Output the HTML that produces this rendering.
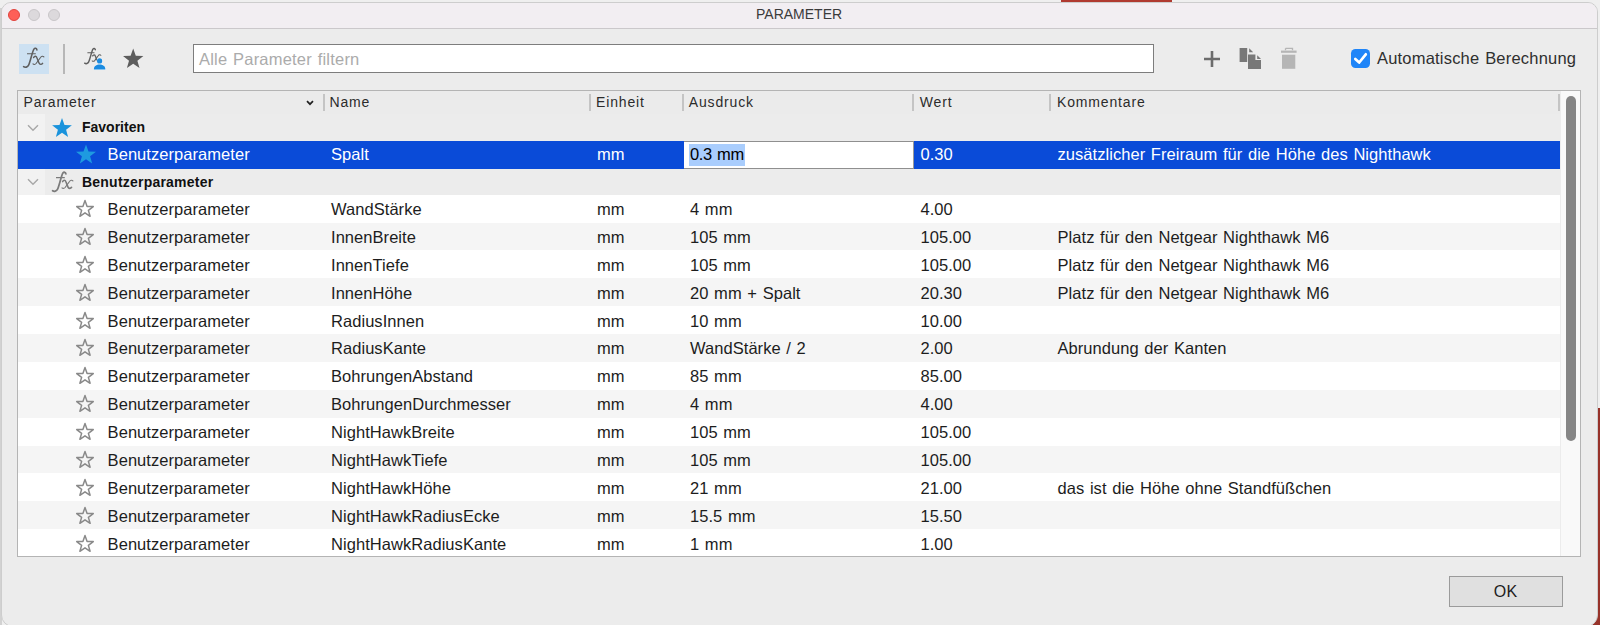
<!DOCTYPE html>
<html><head><meta charset="utf-8"><style>
*{margin:0;padding:0;box-sizing:border-box}
html,body{width:1600px;height:625px;overflow:hidden;background:#efefef;font-family:"Liberation Sans",sans-serif}
.a{position:absolute}
.t{position:absolute;white-space:pre;font-size:16.5px;letter-spacing:0.05px;word-spacing:1px;color:#1d1d1d;line-height:20px}
.h{position:absolute;white-space:pre;font-size:14px;letter-spacing:0.85px;color:#2b2b2b;line-height:18px}
.ic{position:absolute}
</style></head><body>

<div class="a" style="left:0;top:8px;width:2px;height:617px;background:#d2d2d2"></div>
<div class="a" style="left:1061px;top:0;width:111px;height:3px;background:#b03a30"></div>
<div class="a" style="left:1585px;top:408px;width:15px;height:217px;background:#97332a"></div>
<div class="a" style="left:1px;top:2px;width:1597px;height:625px;background:#ececec;border:1px solid #cdcdcd;border-radius:10px 10px 12px 12px;overflow:hidden">
<div class="a" style="left:0;top:0;width:1595px;height:26px;background:#f2eef2;border-bottom:1px solid #cbc8cb"></div>
<div class="a" style="left:6px;top:6px;width:12px;height:12px;border-radius:50%;background:#fe5f57;border:0.5px solid #e0443e"></div>
<div class="a" style="left:26px;top:6px;width:12px;height:12px;border-radius:50%;background:#dcd9dc;border:0.5px solid #c8c5c8"></div>
<div class="a" style="left:46px;top:6px;width:12px;height:12px;border-radius:50%;background:#dcd9dc;border:0.5px solid #c8c5c8"></div>
<div class="a" style="left:754px;top:2px;white-space:pre;font-size:14px;color:#3b3b3b;line-height:18px">PARAMETER</div>
<div class="a" style="left:17px;top:41px;width:30px;height:30px;background:#cde1f2"></div>
<svg class="a" style="left:17px;top:41px" width="30.0" height="30.0" viewBox="0 0 30 30"><g fill="none" stroke="#5f5f5f" stroke-linecap="round"><path d="M17.9 5.9C17.6 4.1 15.9 3.7 14.9 5.1C13.4 7.3 11.2 18 9.6 21.1C8.6 23.2 6.2 23.9 4.6 22.7" stroke-width="1.6"/><path d="M8 9.7H16.8" stroke-width="1.15" stroke-linecap="butt"/><path d="M14.6 13.6C15.5 11.9 17.2 11.8 17.8 13.5L20 19.1C20.6 20.7 22.6 20.8 23.6 19.3" stroke-width="1.45"/><path d="M24.9 12.9C24 11.9 22.5 12 21.5 13.5L17.1 19.5C16.1 20.8 14.6 20.6 14 19.9" stroke-width="1.1"/></g></svg>
<div class="a" style="left:61px;top:41px;width:2px;height:30px;background:#b7b7b7"></div>
<svg class="a" style="left:79px;top:41.5px" width="24.0" height="24.0" viewBox="0 0 30 30"><g fill="none" stroke="#5f5f5f" stroke-linecap="round"><path d="M17.9 5.9C17.6 4.1 15.9 3.7 14.9 5.1C13.4 7.3 11.2 18 9.6 21.1C8.6 23.2 6.2 23.9 4.6 22.7" stroke-width="1.8399999999999999"/><path d="M8 9.7H16.8" stroke-width="1.3224999999999998" stroke-linecap="butt"/><path d="M14.6 13.6C15.5 11.9 17.2 11.8 17.8 13.5L20 19.1C20.6 20.7 22.6 20.8 23.6 19.3" stroke-width="1.6674999999999998"/><path d="M24.9 12.9C24 11.9 22.5 12 21.5 13.5L17.1 19.5C16.1 20.8 14.6 20.6 14 19.9" stroke-width="1.265"/></g></svg>
<svg class="a" style="left:88px;top:51px" width="18" height="18" viewBox="90 54 18 18"><g fill="#1b8be0" stroke="#f4faff" stroke-width="1" paint-order="stroke"><circle cx="99.6" cy="60.9" r="2.6"/><path d="M93.8 69.5C93.8 65.8 96.5 64.4 99.6 64.4C102.7 64.4 105.4 65.8 105.4 69.5Z"/></g></svg>
<svg class="a" style="left:120px;top:45px" width="22" height="22" viewBox="0 0 22 22"><polygon points="11.20,0.60 13.79,7.74 21.38,7.99 15.38,12.66 17.49,19.96 11.20,15.70 4.91,19.96 7.02,12.66 1.02,7.99 8.61,7.74" fill="#5d5d5d"/></svg>
<div class="a" style="left:191px;top:41px;width:961px;height:29px;background:#fff;border:1.5px solid #7d7d7d"></div>
<div class="t" style="left:197px;top:45.7px;color:#ababab;letter-spacing:0.2px">Alle Parameter filtern</div>
<svg class="a" style="left:1201px;top:47px" width="18" height="18" viewBox="0 0 18 18"><path d="M9 1V17M1 9H17" stroke="#6c6c6c" stroke-width="2.6"/></svg>
<svg class="a" style="left:1234px;top:41px" width="28" height="28" viewBox="1236 44 28 28"><g fill="#787878"><path d="M1239.6 48.1H1247.2V61.9H1239.6Z"/><path d="M1249.2 48.2V52.2H1253.2Z"/><path d="M1248 54.5H1255.4V60H1261V69H1248Z"/><path d="M1257.2 55.3V59H1261Z"/></g></svg>
<svg class="a" style="left:1278px;top:43px" width="18" height="24" viewBox="0 0 18 24"><path d="M5.5 2.3H12.5V4.3" fill="none" stroke="#b5b5b5" stroke-width="1.3"/><path d="M5.5 2.3V4.3" stroke="#b5b5b5" stroke-width="1.3"/><rect x="1" y="4.6" width="15.6" height="2.2" fill="#b5b5b5"/><rect x="2" y="8.7" width="13.3" height="14.1" fill="#b5b5b5"/></svg>
<div class="a" style="left:1349px;top:46px;width:19px;height:19px;border-radius:4.5px;background:#1f85f8"></div>
<svg class="a" style="left:1349px;top:46px" width="19" height="19" viewBox="0 0 19 19"><path d="M4.3 9.9L8.2 13.5L14.8 5.3" fill="none" stroke="#fff" stroke-width="2.7" stroke-linecap="round" stroke-linejoin="round"/></svg>
<div class="t" style="left:1375px;top:44.7px;color:#2f2f2f;letter-spacing:0.2px">Automatische Berechnung</div>
<div class="a" style="left:15px;top:87px;width:1564px;height:467px;background:#fff;border:1px solid #b4b4b4;overflow:hidden">
<div class="a" style="left:0;top:0;width:1542px;height:23px;background:#ebebeb"></div>
<div class="a" style="left:305.3px;top:2.7px;width:1.6px;height:17px;background:#c4c4c4"></div>
<div class="a" style="left:571.3px;top:2.7px;width:1.6px;height:17px;background:#c4c4c4"></div>
<div class="a" style="left:664.3px;top:2.7px;width:1.6px;height:17px;background:#c4c4c4"></div>
<div class="a" style="left:894.3px;top:2.7px;width:1.6px;height:17px;background:#c4c4c4"></div>
<div class="a" style="left:1031.3px;top:2.7px;width:1.6px;height:17px;background:#c4c4c4"></div>
<div class="a" style="left:1540.3px;top:2.7px;width:1.6px;height:17px;background:#c4c4c4"></div>
<div class="h" style="left:5.5px;top:1.5px">Parameter</div>
<div class="h" style="left:311.5px;top:1.5px">Name</div>
<div class="h" style="left:578px;top:1.5px">Einheit</div>
<div class="h" style="left:670.8px;top:1.5px">Ausdruck</div>
<div class="h" style="left:901.8px;top:1.5px">Wert</div>
<div class="h" style="left:1039px;top:1.5px">Kommentare</div>
<svg class="a" style="left:287px;top:7.6px" width="10" height="8" viewBox="0 0 10 8"><path d="M2 2.2L5 5.2L8 2.2" fill="none" stroke="#222" stroke-width="1.7"/></svg>
<div class="a" style="left:1542px;top:0;width:21px;height:467px;background:#f9f9f9;border-left:1px solid #ececec"></div>
<div class="a" style="left:1547.5px;top:4.5px;width:10.5px;height:345px;border-radius:5.25px;background:#858585"></div>
<div class="a" style="left:0;top:23px;width:1542px;height:27px;background:#ececec"></div>
<div class="a" style="left:0;top:23px;width:27px;height:27px;background:#f2f2f2"></div>
<svg class="a" style="left:9px;top:33px" width="12" height="8" viewBox="0 0 12 8"><path d="M1 1.3L6 6.3L11 1.3" fill="none" stroke="#a9a9a9" stroke-width="1.5"/></svg>
<svg class="a" style="left:32.4px;top:25px" width="24" height="24" viewBox="0 0 24 24"><polygon points="12.00,2.10 14.53,9.02 21.89,9.29 16.09,13.83 18.11,20.91 12.00,16.80 5.89,20.91 7.91,13.83 2.11,9.29 9.47,9.02" fill="#1a93dc"/></svg>
<div class="h" style="left:64px;top:27px;font-weight:bold;color:#111;letter-spacing:0px;font-size:14px">Favoriten</div>
<div class="a" style="left:0;top:50px;width:1542px;height:28px;background:#0a4bd8"></div>
<svg class="a" style="left:55.8px;top:52px" width="24" height="24" viewBox="0 0 24 24"><polygon points="12.00,1.50 14.53,8.52 21.99,8.76 16.09,13.33 18.17,20.49 12.00,16.30 5.83,20.49 7.91,13.33 2.01,8.76 9.47,8.52" fill="#1e9ae0"/></svg>
<div class="t" style="left:89.6px;top:53px;color:#fff">Benutzerparameter</div>
<div class="t" style="left:313px;top:53px;color:#fff">Spalt</div>
<div class="t" style="left:579px;top:53px;color:#fff">mm</div>
<div class="t" style="left:902.5px;top:53px;color:#fff">0.30</div>
<div class="t" style="left:1039.5px;top:53px;color:#fff">zusätzlicher Freiraum für die Höhe des Nighthawk</div>
<div class="a" style="left:665.5px;top:50px;width:230px;height:28px;background:#fff;border-top:1px solid #8f8f8f;border-bottom:1px solid #8f8f8f;border-right:1px solid #9a9a9a"></div>
<div class="a" style="left:671px;top:53.3px;width:56px;height:21.5px;background:#a9cdfd"></div>
<div class="t" style="left:672px;top:53px;color:#000;letter-spacing:-0.35px">0.3 mm</div>
<div class="a" style="left:0;top:78px;width:1542px;height:26px;background:#ececec"></div>
<div class="a" style="left:0;top:78px;width:27px;height:26px;background:#f2f2f2"></div>
<svg class="a" style="left:9px;top:87px" width="12" height="8" viewBox="0 0 12 8"><path d="M1 1.3L6 6.3L11 1.3" fill="none" stroke="#a9a9a9" stroke-width="1.5"/></svg>
<svg class="a" style="left:30.3px;top:77px" width="30.0" height="30.0" viewBox="0 0 30 30"><g fill="none" stroke="#7b7b7b" stroke-linecap="round"><path d="M17.9 5.9C17.6 4.1 15.9 3.7 14.9 5.1C13.4 7.3 11.2 18 9.6 21.1C8.6 23.2 6.2 23.9 4.6 22.7" stroke-width="1.7600000000000002"/><path d="M8 9.7H16.8" stroke-width="1.265" stroke-linecap="butt"/><path d="M14.6 13.6C15.5 11.9 17.2 11.8 17.8 13.5L20 19.1C20.6 20.7 22.6 20.8 23.6 19.3" stroke-width="1.595"/><path d="M24.9 12.9C24 11.9 22.5 12 21.5 13.5L17.1 19.5C16.1 20.8 14.6 20.6 14 19.9" stroke-width="1.2100000000000002"/></g></svg>
<div class="h" style="left:64px;top:82px;font-weight:bold;color:#111;letter-spacing:0.22px;font-size:14px">Benutzerparameter</div>
<div class="a" style="left:0;top:103.7px;width:1542px;height:27.98px;background:#ffffff"></div>
<svg class="a" style="left:56px;top:107.0px" width="22" height="22" viewBox="0 0 22 22"><polygon points="11.00,2.55 13.09,8.38 19.27,8.56 14.38,12.35 16.11,18.29 11.00,14.80 5.89,18.29 7.62,12.35 2.73,8.56 8.91,8.38" fill="none" stroke="#8a8a8a" stroke-width="1.5" stroke-linejoin="round"/></svg>
<div class="t" style="left:89.6px;top:108.0px">Benutzerparameter</div>
<div class="t" style="left:313px;top:108.0px">WandStärke</div>
<div class="t" style="left:579px;top:108.0px">mm</div>
<div class="t" style="left:672px;top:108.0px">4 mm</div>
<div class="t" style="left:902.5px;top:108.0px">4.00</div>
<div class="a" style="left:0;top:131.57px;width:1542px;height:27.98px;background:#f5f5f5"></div>
<svg class="a" style="left:56px;top:134.88px" width="22" height="22" viewBox="0 0 22 22"><polygon points="11.00,2.55 13.09,8.38 19.27,8.56 14.38,12.35 16.11,18.29 11.00,14.80 5.89,18.29 7.62,12.35 2.73,8.56 8.91,8.38" fill="none" stroke="#8a8a8a" stroke-width="1.5" stroke-linejoin="round"/></svg>
<div class="t" style="left:89.6px;top:135.88px">Benutzerparameter</div>
<div class="t" style="left:313px;top:135.88px">InnenBreite</div>
<div class="t" style="left:579px;top:135.88px">mm</div>
<div class="t" style="left:672px;top:135.88px">105 mm</div>
<div class="t" style="left:902.5px;top:135.88px">105.00</div>
<div class="t" style="left:1039.5px;top:135.88px">Platz für den Netgear Nighthawk M6</div>
<div class="a" style="left:0;top:159.45px;width:1542px;height:27.98px;background:#ffffff"></div>
<svg class="a" style="left:56px;top:162.75px" width="22" height="22" viewBox="0 0 22 22"><polygon points="11.00,2.55 13.09,8.38 19.27,8.56 14.38,12.35 16.11,18.29 11.00,14.80 5.89,18.29 7.62,12.35 2.73,8.56 8.91,8.38" fill="none" stroke="#8a8a8a" stroke-width="1.5" stroke-linejoin="round"/></svg>
<div class="t" style="left:89.6px;top:163.75px">Benutzerparameter</div>
<div class="t" style="left:313px;top:163.75px">InnenTiefe</div>
<div class="t" style="left:579px;top:163.75px">mm</div>
<div class="t" style="left:672px;top:163.75px">105 mm</div>
<div class="t" style="left:902.5px;top:163.75px">105.00</div>
<div class="t" style="left:1039.5px;top:163.75px">Platz für den Netgear Nighthawk M6</div>
<div class="a" style="left:0;top:187.32px;width:1542px;height:27.98px;background:#f5f5f5"></div>
<svg class="a" style="left:56px;top:190.62px" width="22" height="22" viewBox="0 0 22 22"><polygon points="11.00,2.55 13.09,8.38 19.27,8.56 14.38,12.35 16.11,18.29 11.00,14.80 5.89,18.29 7.62,12.35 2.73,8.56 8.91,8.38" fill="none" stroke="#8a8a8a" stroke-width="1.5" stroke-linejoin="round"/></svg>
<div class="t" style="left:89.6px;top:191.62px">Benutzerparameter</div>
<div class="t" style="left:313px;top:191.62px">InnenHöhe</div>
<div class="t" style="left:579px;top:191.62px">mm</div>
<div class="t" style="left:672px;top:191.62px">20 mm + Spalt</div>
<div class="t" style="left:902.5px;top:191.62px">20.30</div>
<div class="t" style="left:1039.5px;top:191.62px">Platz für den Netgear Nighthawk M6</div>
<div class="a" style="left:0;top:215.2px;width:1542px;height:27.98px;background:#ffffff"></div>
<svg class="a" style="left:56px;top:218.5px" width="22" height="22" viewBox="0 0 22 22"><polygon points="11.00,2.55 13.09,8.38 19.27,8.56 14.38,12.35 16.11,18.29 11.00,14.80 5.89,18.29 7.62,12.35 2.73,8.56 8.91,8.38" fill="none" stroke="#8a8a8a" stroke-width="1.5" stroke-linejoin="round"/></svg>
<div class="t" style="left:89.6px;top:219.5px">Benutzerparameter</div>
<div class="t" style="left:313px;top:219.5px">RadiusInnen</div>
<div class="t" style="left:579px;top:219.5px">mm</div>
<div class="t" style="left:672px;top:219.5px">10 mm</div>
<div class="t" style="left:902.5px;top:219.5px">10.00</div>
<div class="a" style="left:0;top:243.07px;width:1542px;height:27.98px;background:#f5f5f5"></div>
<svg class="a" style="left:56px;top:246.38px" width="22" height="22" viewBox="0 0 22 22"><polygon points="11.00,2.55 13.09,8.38 19.27,8.56 14.38,12.35 16.11,18.29 11.00,14.80 5.89,18.29 7.62,12.35 2.73,8.56 8.91,8.38" fill="none" stroke="#8a8a8a" stroke-width="1.5" stroke-linejoin="round"/></svg>
<div class="t" style="left:89.6px;top:247.38px">Benutzerparameter</div>
<div class="t" style="left:313px;top:247.38px">RadiusKante</div>
<div class="t" style="left:579px;top:247.38px">mm</div>
<div class="t" style="left:672px;top:247.38px">WandStärke / 2</div>
<div class="t" style="left:902.5px;top:247.38px">2.00</div>
<div class="t" style="left:1039.5px;top:247.38px">Abrundung der Kanten</div>
<div class="a" style="left:0;top:270.95px;width:1542px;height:27.98px;background:#ffffff"></div>
<svg class="a" style="left:56px;top:274.25px" width="22" height="22" viewBox="0 0 22 22"><polygon points="11.00,2.55 13.09,8.38 19.27,8.56 14.38,12.35 16.11,18.29 11.00,14.80 5.89,18.29 7.62,12.35 2.73,8.56 8.91,8.38" fill="none" stroke="#8a8a8a" stroke-width="1.5" stroke-linejoin="round"/></svg>
<div class="t" style="left:89.6px;top:275.25px">Benutzerparameter</div>
<div class="t" style="left:313px;top:275.25px">BohrungenAbstand</div>
<div class="t" style="left:579px;top:275.25px">mm</div>
<div class="t" style="left:672px;top:275.25px">85 mm</div>
<div class="t" style="left:902.5px;top:275.25px">85.00</div>
<div class="a" style="left:0;top:298.82px;width:1542px;height:27.98px;background:#f5f5f5"></div>
<svg class="a" style="left:56px;top:302.12px" width="22" height="22" viewBox="0 0 22 22"><polygon points="11.00,2.55 13.09,8.38 19.27,8.56 14.38,12.35 16.11,18.29 11.00,14.80 5.89,18.29 7.62,12.35 2.73,8.56 8.91,8.38" fill="none" stroke="#8a8a8a" stroke-width="1.5" stroke-linejoin="round"/></svg>
<div class="t" style="left:89.6px;top:303.12px">Benutzerparameter</div>
<div class="t" style="left:313px;top:303.12px">BohrungenDurchmesser</div>
<div class="t" style="left:579px;top:303.12px">mm</div>
<div class="t" style="left:672px;top:303.12px">4 mm</div>
<div class="t" style="left:902.5px;top:303.12px">4.00</div>
<div class="a" style="left:0;top:326.7px;width:1542px;height:27.98px;background:#ffffff"></div>
<svg class="a" style="left:56px;top:330.0px" width="22" height="22" viewBox="0 0 22 22"><polygon points="11.00,2.55 13.09,8.38 19.27,8.56 14.38,12.35 16.11,18.29 11.00,14.80 5.89,18.29 7.62,12.35 2.73,8.56 8.91,8.38" fill="none" stroke="#8a8a8a" stroke-width="1.5" stroke-linejoin="round"/></svg>
<div class="t" style="left:89.6px;top:331.0px">Benutzerparameter</div>
<div class="t" style="left:313px;top:331.0px">NightHawkBreite</div>
<div class="t" style="left:579px;top:331.0px">mm</div>
<div class="t" style="left:672px;top:331.0px">105 mm</div>
<div class="t" style="left:902.5px;top:331.0px">105.00</div>
<div class="a" style="left:0;top:354.57px;width:1542px;height:27.98px;background:#f5f5f5"></div>
<svg class="a" style="left:56px;top:357.88px" width="22" height="22" viewBox="0 0 22 22"><polygon points="11.00,2.55 13.09,8.38 19.27,8.56 14.38,12.35 16.11,18.29 11.00,14.80 5.89,18.29 7.62,12.35 2.73,8.56 8.91,8.38" fill="none" stroke="#8a8a8a" stroke-width="1.5" stroke-linejoin="round"/></svg>
<div class="t" style="left:89.6px;top:358.88px">Benutzerparameter</div>
<div class="t" style="left:313px;top:358.88px">NightHawkTiefe</div>
<div class="t" style="left:579px;top:358.88px">mm</div>
<div class="t" style="left:672px;top:358.88px">105 mm</div>
<div class="t" style="left:902.5px;top:358.88px">105.00</div>
<div class="a" style="left:0;top:382.45px;width:1542px;height:27.98px;background:#ffffff"></div>
<svg class="a" style="left:56px;top:385.75px" width="22" height="22" viewBox="0 0 22 22"><polygon points="11.00,2.55 13.09,8.38 19.27,8.56 14.38,12.35 16.11,18.29 11.00,14.80 5.89,18.29 7.62,12.35 2.73,8.56 8.91,8.38" fill="none" stroke="#8a8a8a" stroke-width="1.5" stroke-linejoin="round"/></svg>
<div class="t" style="left:89.6px;top:386.75px">Benutzerparameter</div>
<div class="t" style="left:313px;top:386.75px">NightHawkHöhe</div>
<div class="t" style="left:579px;top:386.75px">mm</div>
<div class="t" style="left:672px;top:386.75px">21 mm</div>
<div class="t" style="left:902.5px;top:386.75px">21.00</div>
<div class="t" style="left:1039.5px;top:386.75px">das ist die Höhe ohne Standfüßchen</div>
<div class="a" style="left:0;top:410.32px;width:1542px;height:27.98px;background:#f5f5f5"></div>
<svg class="a" style="left:56px;top:413.62px" width="22" height="22" viewBox="0 0 22 22"><polygon points="11.00,2.55 13.09,8.38 19.27,8.56 14.38,12.35 16.11,18.29 11.00,14.80 5.89,18.29 7.62,12.35 2.73,8.56 8.91,8.38" fill="none" stroke="#8a8a8a" stroke-width="1.5" stroke-linejoin="round"/></svg>
<div class="t" style="left:89.6px;top:414.62px">Benutzerparameter</div>
<div class="t" style="left:313px;top:414.62px">NightHawkRadiusEcke</div>
<div class="t" style="left:579px;top:414.62px">mm</div>
<div class="t" style="left:672px;top:414.62px">15.5 mm</div>
<div class="t" style="left:902.5px;top:414.62px">15.50</div>
<div class="a" style="left:0;top:438.2px;width:1542px;height:27.98px;background:#ffffff"></div>
<svg class="a" style="left:56px;top:441.5px" width="22" height="22" viewBox="0 0 22 22"><polygon points="11.00,2.55 13.09,8.38 19.27,8.56 14.38,12.35 16.11,18.29 11.00,14.80 5.89,18.29 7.62,12.35 2.73,8.56 8.91,8.38" fill="none" stroke="#8a8a8a" stroke-width="1.5" stroke-linejoin="round"/></svg>
<div class="t" style="left:89.6px;top:442.5px">Benutzerparameter</div>
<div class="t" style="left:313px;top:442.5px">NightHawkRadiusKante</div>
<div class="t" style="left:579px;top:442.5px">mm</div>
<div class="t" style="left:672px;top:442.5px">1 mm</div>
<div class="t" style="left:902.5px;top:442.5px">1.00</div>
</div>
<div class="a" style="left:1446.5px;top:573px;width:114px;height:31px;background:#e0e0e0;border:1.2px solid #9b9b9b;text-align:center;font-size:16px;line-height:29px;color:#1d1d1d;letter-spacing:0.3px">OK</div>
</div>
</body></html>
